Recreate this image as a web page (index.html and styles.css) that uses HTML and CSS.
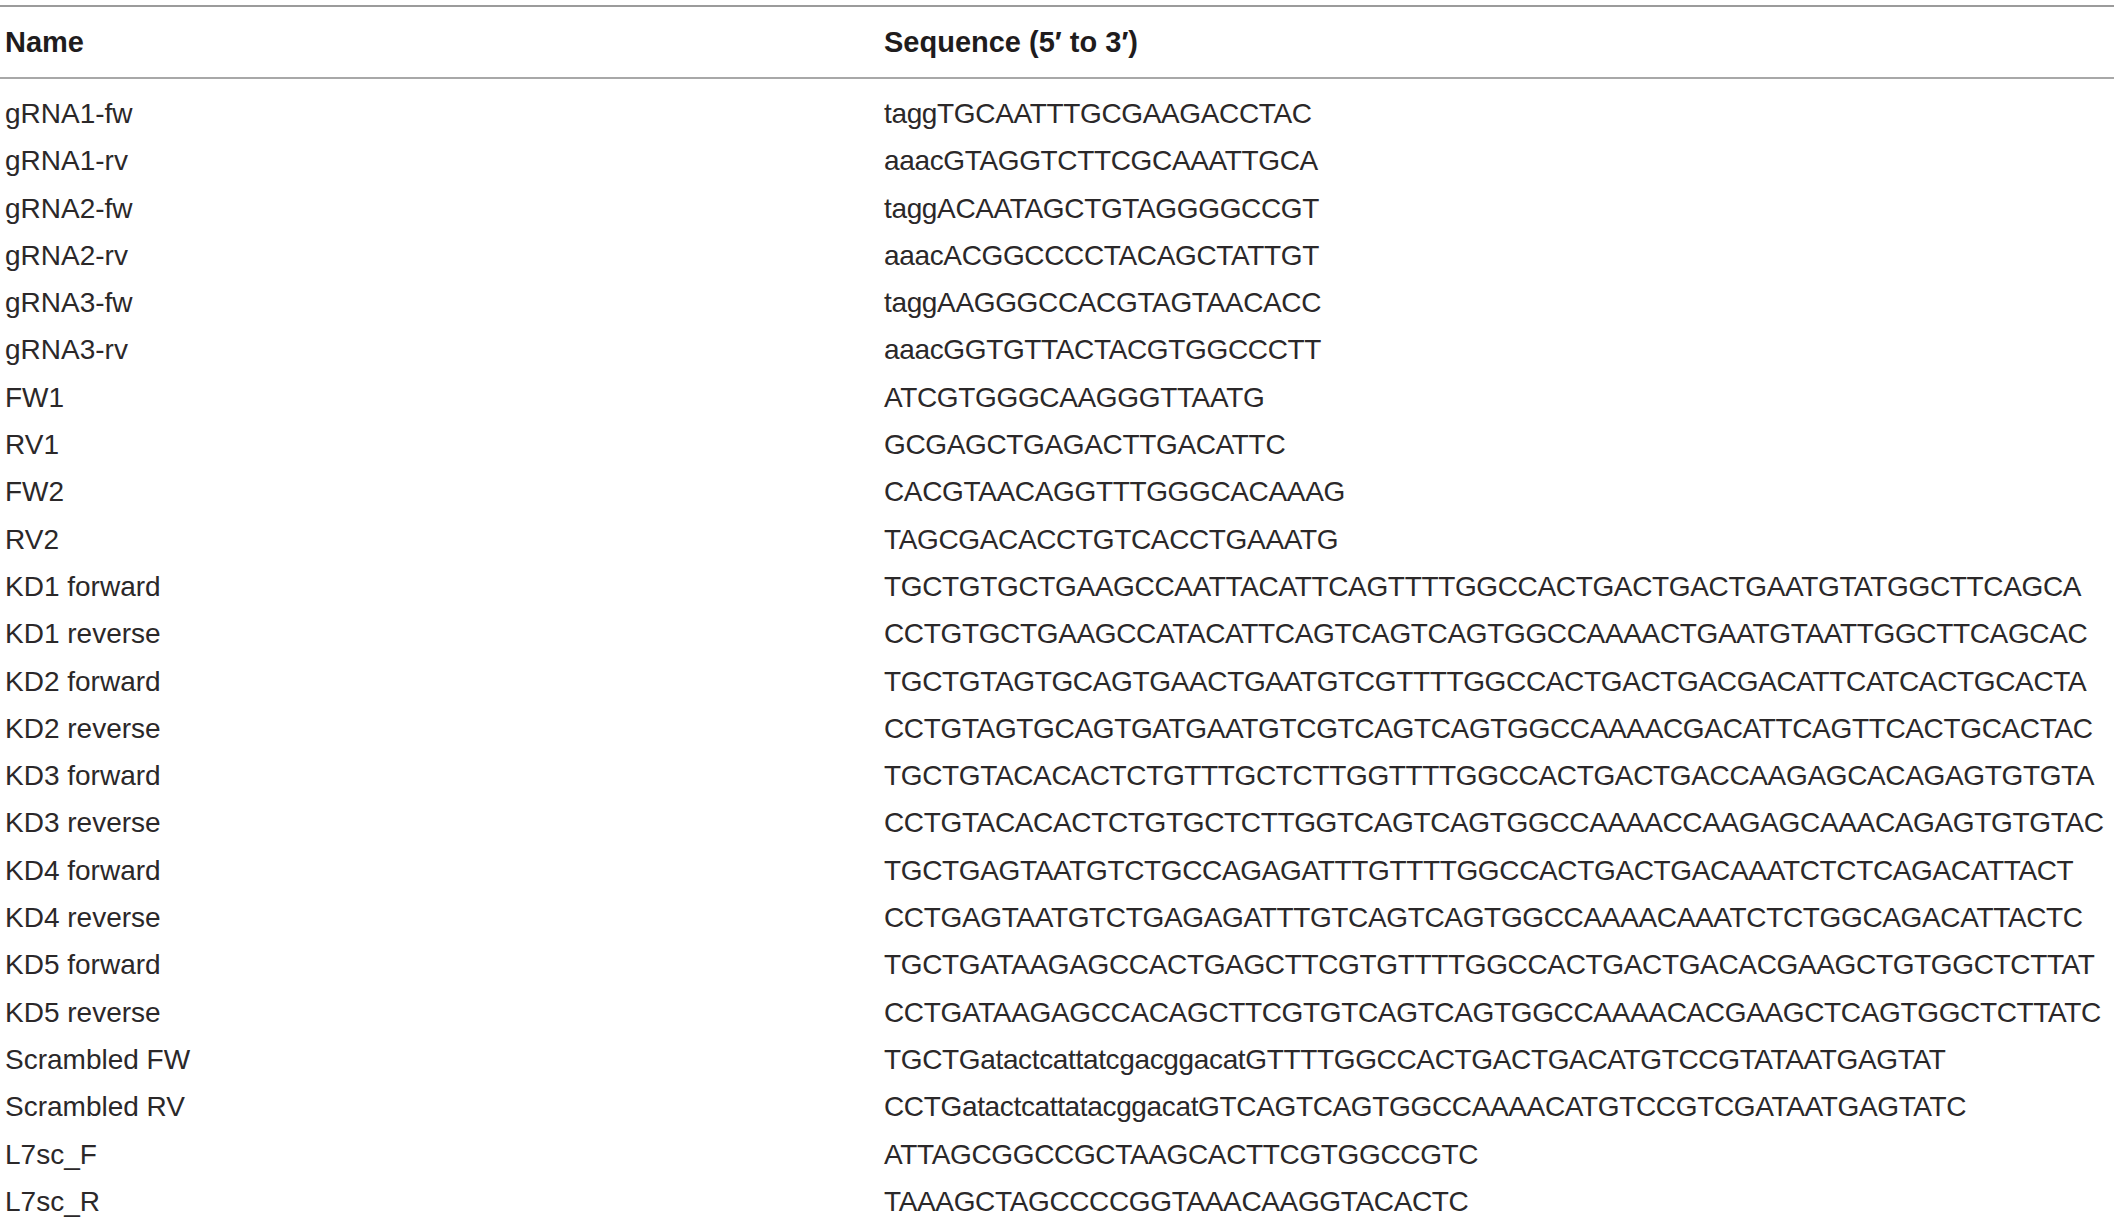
FILE: index.html
```html
<!DOCTYPE html>
<html>
<head>
<meta charset="utf-8">
<link rel="stylesheet" href="styles.css">
</head>
<body>
<div class="wrap">
  <div class="table">
    <div class="head">
      <div class="cell name">Name</div>
      <div class="cell seq">Sequence (5′ to 3′)</div>
    </div>
    <div class="body">
      <div class="row"><div class="cell name">gRNA1-fw</div><div class="cell seq">taggTGCAATTTGCGAAGACCTAC</div></div>
      <div class="row"><div class="cell name">gRNA1-rv</div><div class="cell seq">aaacGTAGGTCTTCGCAAATTGCA</div></div>
      <div class="row"><div class="cell name">gRNA2-fw</div><div class="cell seq">taggACAATAGCTGTAGGGGCCGT</div></div>
      <div class="row"><div class="cell name">gRNA2-rv</div><div class="cell seq">aaacACGGCCCCTACAGCTATTGT</div></div>
      <div class="row"><div class="cell name">gRNA3-fw</div><div class="cell seq">taggAAGGGCCACGTAGTAACACC</div></div>
      <div class="row"><div class="cell name">gRNA3-rv</div><div class="cell seq">aaacGGTGTTACTACGTGGCCCTT</div></div>
      <div class="row"><div class="cell name">FW1</div><div class="cell seq">ATCGTGGGCAAGGGTTAATG</div></div>
      <div class="row"><div class="cell name">RV1</div><div class="cell seq">GCGAGCTGAGACTTGACATTC</div></div>
      <div class="row"><div class="cell name">FW2</div><div class="cell seq">CACGTAACAGGTTTGGGCACAAAG</div></div>
      <div class="row"><div class="cell name">RV2</div><div class="cell seq">TAGCGACACCTGTCACCTGAAATG</div></div>
      <div class="row"><div class="cell name">KD1 forward</div><div class="cell seq">TGCTGTGCTGAAGCCAATTACATTCAGTTTTGGCCACTGACTGACTGAATGTATGGCTTCAGCA</div></div>
      <div class="row"><div class="cell name">KD1 reverse</div><div class="cell seq">CCTGTGCTGAAGCCATACATTCAGTCAGTCAGTGGCCAAAACTGAATGTAATTGGCTTCAGCAC</div></div>
      <div class="row"><div class="cell name">KD2 forward</div><div class="cell seq">TGCTGTAGTGCAGTGAACTGAATGTCGTTTTGGCCACTGACTGACGACATTCATCACTGCACTA</div></div>
      <div class="row"><div class="cell name">KD2 reverse</div><div class="cell seq">CCTGTAGTGCAGTGATGAATGTCGTCAGTCAGTGGCCAAAACGACATTCAGTTCACTGCACTAC</div></div>
      <div class="row"><div class="cell name">KD3 forward</div><div class="cell seq">TGCTGTACACACTCTGTTTGCTCTTGGTTTTGGCCACTGACTGACCAAGAGCACAGAGTGTGTA</div></div>
      <div class="row"><div class="cell name">KD3 reverse</div><div class="cell seq">CCTGTACACACTCTGTGCTCTTGGTCAGTCAGTGGCCAAAACCAAGAGCAAACAGAGTGTGTAC</div></div>
      <div class="row"><div class="cell name">KD4 forward</div><div class="cell seq">TGCTGAGTAATGTCTGCCAGAGATTTGTTTTGGCCACTGACTGACAAATCTCTCAGACATTACT</div></div>
      <div class="row"><div class="cell name">KD4 reverse</div><div class="cell seq">CCTGAGTAATGTCTGAGAGATTTGTCAGTCAGTGGCCAAAACAAATCTCTGGCAGACATTACTC</div></div>
      <div class="row"><div class="cell name">KD5 forward</div><div class="cell seq">TGCTGATAAGAGCCACTGAGCTTCGTGTTTTGGCCACTGACTGACACGAAGCTGTGGCTCTTAT</div></div>
      <div class="row"><div class="cell name">KD5 reverse</div><div class="cell seq">CCTGATAAGAGCCACAGCTTCGTGTCAGTCAGTGGCCAAAACACGAAGCTCAGTGGCTCTTATC</div></div>
      <div class="row"><div class="cell name">Scrambled FW</div><div class="cell seq">TGCTGatactcattatcgacggacatGTTTTGGCCACTGACTGACATGTCCGTATAATGAGTAT</div></div>
      <div class="row"><div class="cell name">Scrambled RV</div><div class="cell seq">CCTGatactcattatacggacatGTCAGTCAGTGGCCAAAACATGTCCGTCGATAATGAGTATC</div></div>
      <div class="row"><div class="cell name">L7sc_F</div><div class="cell seq">ATTAGCGGCCGCTAAGCACTTCGTGGCCGTC</div></div>
      <div class="row"><div class="cell name">L7sc_R</div><div class="cell seq">TAAAGCTAGCCCCGGTAAACAAGGTACACTC</div></div>
    </div>
  </div>
</div>
</body>
</html>
```

FILE: styles.css
```css
html, body {
  margin: 0;
  padding: 0;
  background: #ffffff;
}

body {
  font-family: "Liberation Sans", Arial, Helvetica, sans-serif;
  font-size: 28px;
  color: #2b2829;
  overflow: hidden;
}

.wrap {
  padding-top: 5px;
  width: 2114px;
}

.table {
  display: flex;
  flex-direction: column;
}

.head {
  display: grid;
  grid-template-columns: 879px 1fr;
  border-top: 2px solid #9b9b9b;
  border-bottom: 2px solid #a8a8a8;
  padding: 1px 0 0 5px;
  line-height: 69px;
  font-size: 29px;
  font-weight: bold;
  color: #1f1c1d;
}

.body {
  padding-top: 11px;
}

.row {
  display: grid;
  grid-template-columns: 879px 1fr;
  padding-left: 5px;
  line-height: 47.3px;
  height: 47.3px;
}

.cell {
  white-space: nowrap;
}

.row .seq {
  letter-spacing: -0.35px;
}
```
